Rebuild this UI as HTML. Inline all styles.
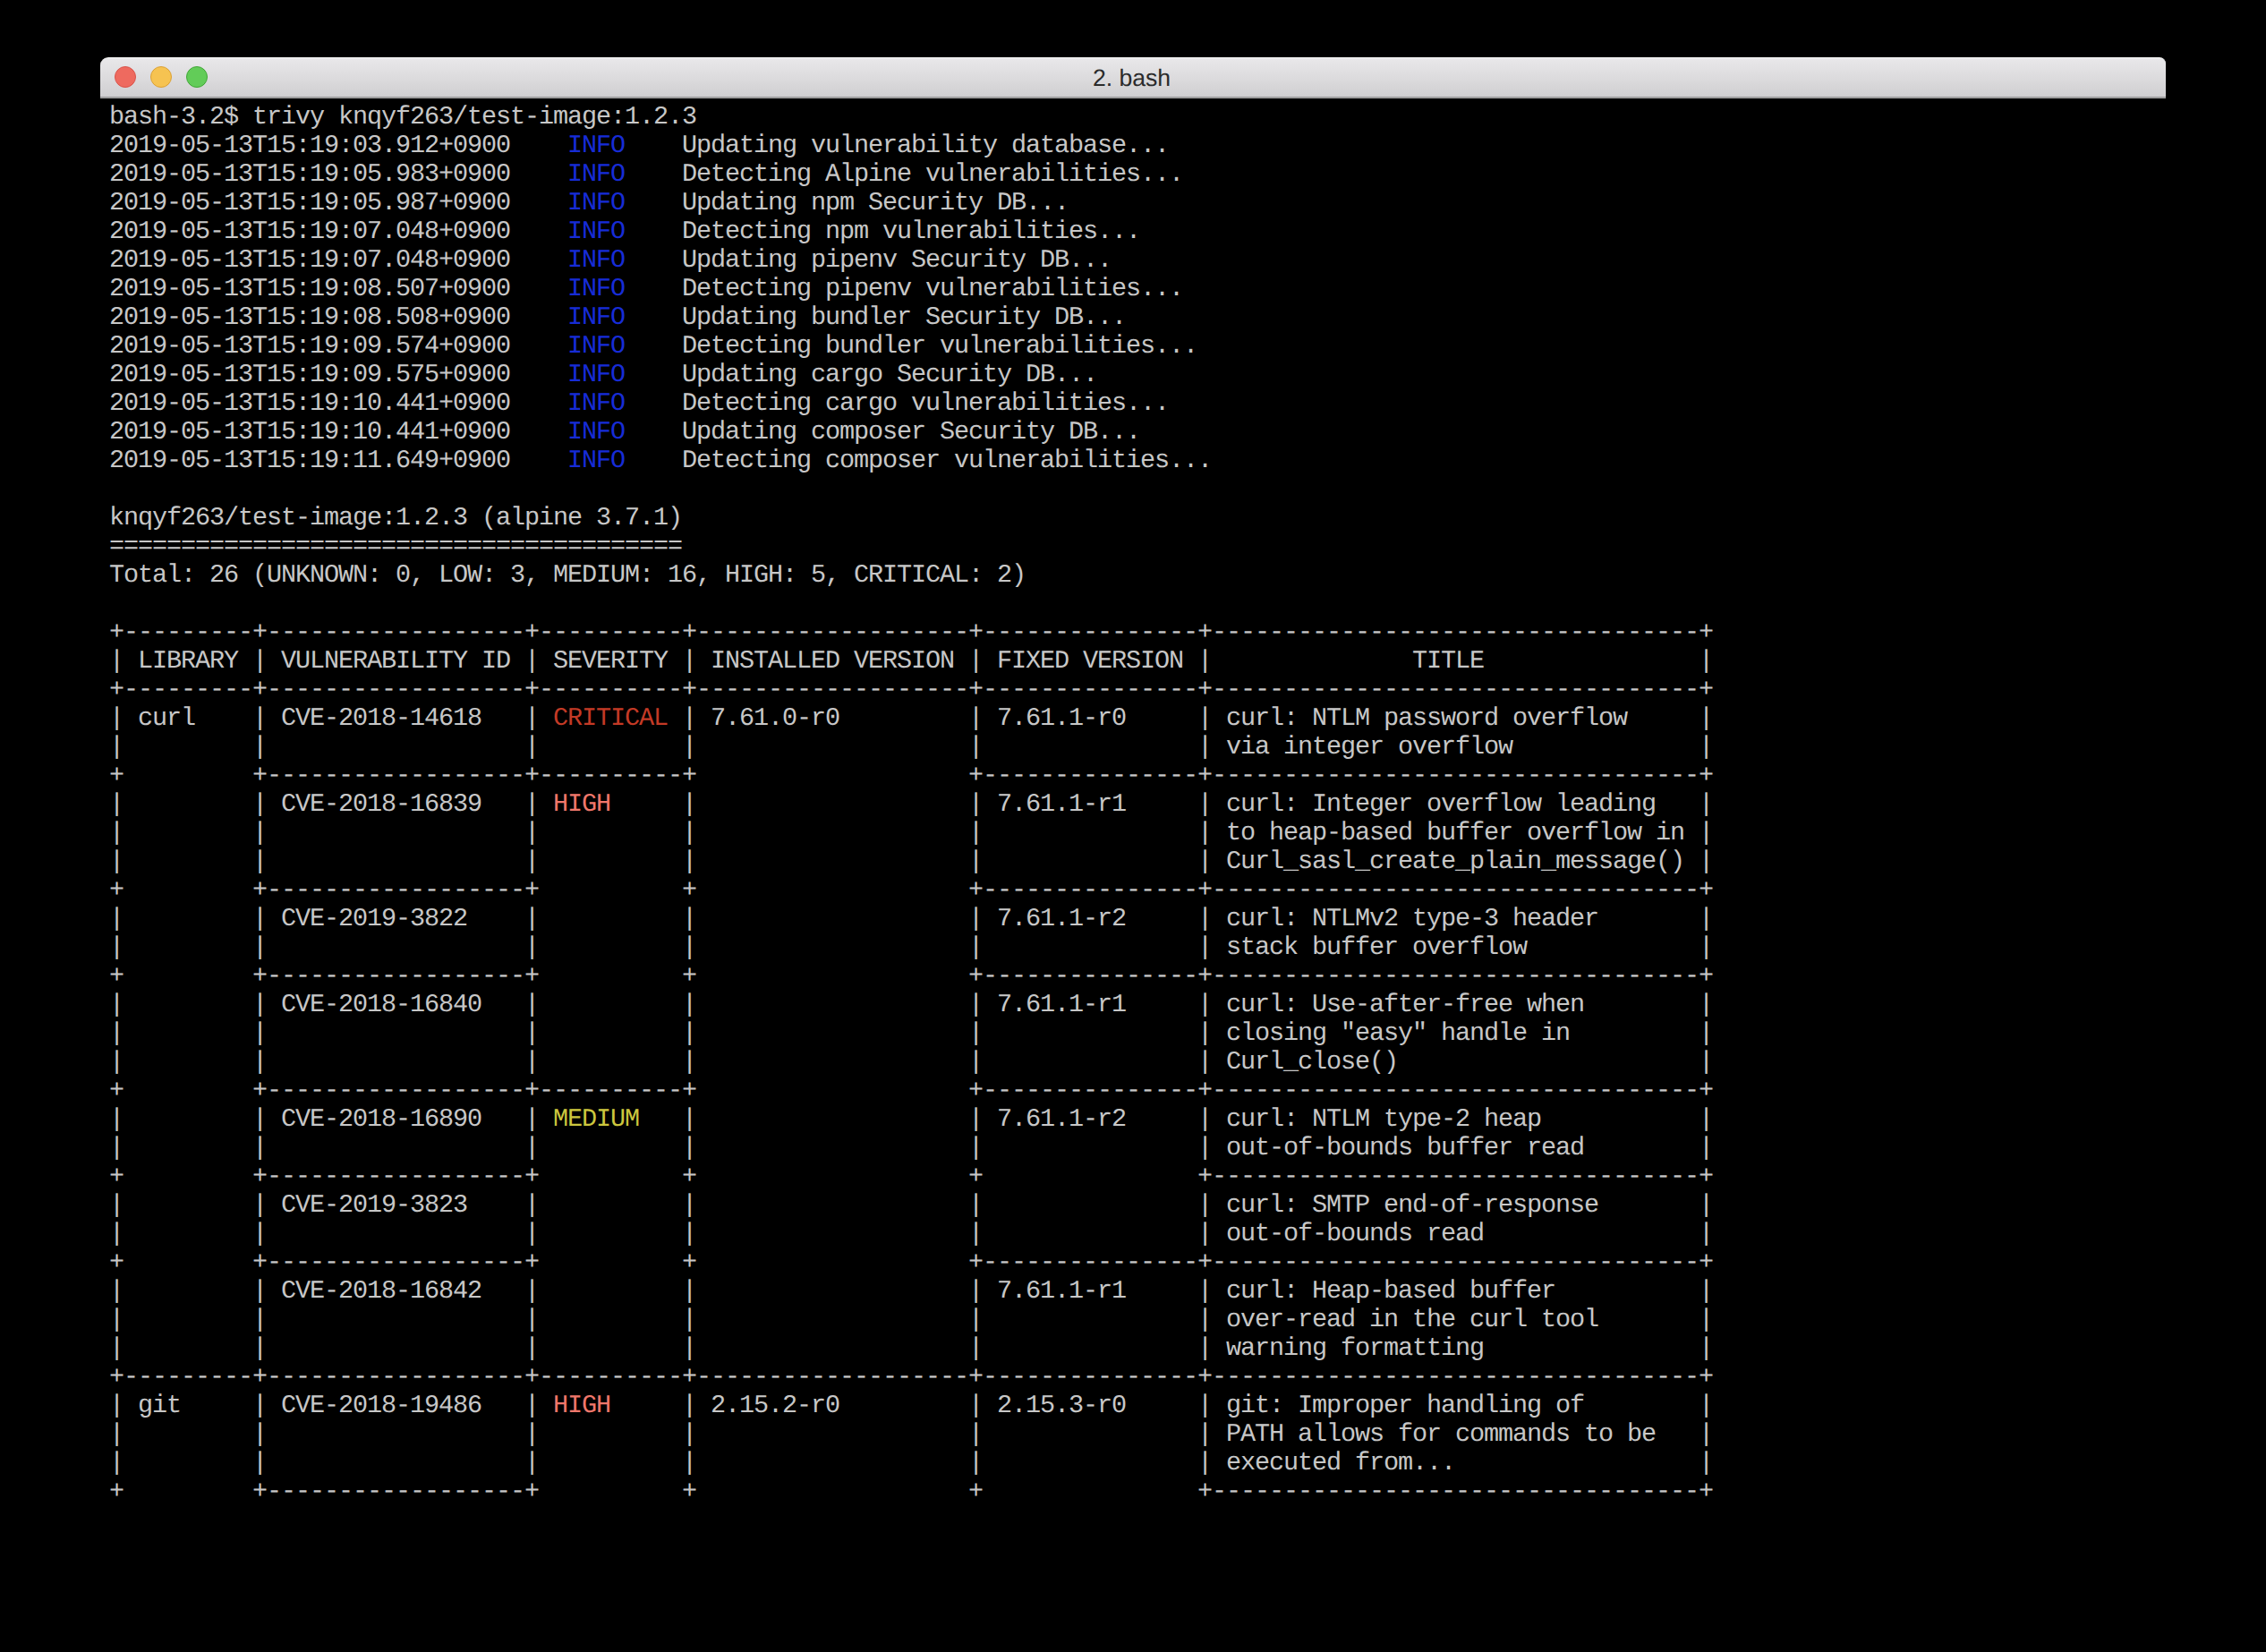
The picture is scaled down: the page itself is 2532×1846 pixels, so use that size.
<!DOCTYPE html>
<html><head><meta charset="utf-8">
<style>
html,body{margin:0;padding:0;background:#000;}
body{width:2532px;height:1846px;position:relative;overflow:hidden;}
#win{position:absolute;left:112px;top:64px;width:2308px;height:1782px;background:#000;}
#bar{position:absolute;left:112px;top:64px;width:2308px;height:44px;box-sizing:border-box;border-radius:9px 7px 0 0;
 background:linear-gradient(#e9e8ea,#d0cfd1);border-top:1px solid #f9f9f9;}
#l1{position:absolute;left:112px;top:108px;width:2308px;height:1px;background:#969696;}
#l2{position:absolute;left:112px;top:109px;width:2308px;height:1px;background:#a7a7a7;}
.dot{position:absolute;top:9px;width:24px;height:24px;border-radius:50%;box-sizing:border-box;}
#d1{left:16px;background:#ee6a5f;border:1px solid #d9534a;}
#d2{left:56px;background:#f6c351;border:1px solid #dba136;}
#d3{left:96px;background:#62cc58;border:1px solid #41a737;}
#title{position:absolute;left:-3px;right:0;top:0;height:44px;line-height:44px;text-align:center;font-family:"Liberation Sans",sans-serif;font-size:26.6px;color:#2b2b2b;text-rendering:geometricPrecision;}
#term{position:absolute;left:122px;top:115px;margin:0;font-family:"Liberation Mono",monospace;font-size:28.5px;letter-spacing:-1.1028px;line-height:32px;color:#c7c7c7;white-space:pre;text-rendering:geometricPrecision;}
.b{color:#172cd6;}
.r{color:#c43a26;}
.h{color:#f0776b;}
.y{color:#cdc63e;}
</style></head><body>
<div id="win"></div>
<div id="bar"><div class="dot" id="d1"></div><div class="dot" id="d2"></div><div class="dot" id="d3"></div><div id="title">2. bash</div></div>
<div id="l1"></div><div id="l2"></div>
<pre id="term">bash-3.2$ trivy knqyf263/test-image:1.2.3
2019-05-13T15:19:03.912+0900    <span class="b">INFO</span>    Updating vulnerability database...
2019-05-13T15:19:05.983+0900    <span class="b">INFO</span>    Detecting Alpine vulnerabilities...
2019-05-13T15:19:05.987+0900    <span class="b">INFO</span>    Updating npm Security DB...
2019-05-13T15:19:07.048+0900    <span class="b">INFO</span>    Detecting npm vulnerabilities...
2019-05-13T15:19:07.048+0900    <span class="b">INFO</span>    Updating pipenv Security DB...
2019-05-13T15:19:08.507+0900    <span class="b">INFO</span>    Detecting pipenv vulnerabilities...
2019-05-13T15:19:08.508+0900    <span class="b">INFO</span>    Updating bundler Security DB...
2019-05-13T15:19:09.574+0900    <span class="b">INFO</span>    Detecting bundler vulnerabilities...
2019-05-13T15:19:09.575+0900    <span class="b">INFO</span>    Updating cargo Security DB...
2019-05-13T15:19:10.441+0900    <span class="b">INFO</span>    Detecting cargo vulnerabilities...
2019-05-13T15:19:10.441+0900    <span class="b">INFO</span>    Updating composer Security DB...
2019-05-13T15:19:11.649+0900    <span class="b">INFO</span>    Detecting composer vulnerabilities...

knqyf263/test-image:1.2.3 (alpine 3.7.1)
========================================
Total: 26 (UNKNOWN: 0, LOW: 3, MEDIUM: 16, HIGH: 5, CRITICAL: 2)

+---------+------------------+----------+-------------------+---------------+----------------------------------+
| LIBRARY | VULNERABILITY ID | SEVERITY | INSTALLED VERSION | FIXED VERSION |              TITLE               |
+---------+------------------+----------+-------------------+---------------+----------------------------------+
| curl    | CVE-2018-14618   | <span class="r">CRITICAL</span> | 7.61.0-r0         | 7.61.1-r0     | curl: NTLM password overflow     |
|         |                  |          |                   |               | via integer overflow             |
+         +------------------+----------+                   +---------------+----------------------------------+
|         | CVE-2018-16839   | <span class="h">HIGH</span>     |                   | 7.61.1-r1     | curl: Integer overflow leading   |
|         |                  |          |                   |               | to heap-based buffer overflow in |
|         |                  |          |                   |               | Curl_sasl_create_plain_message() |
+         +------------------+          +                   +---------------+----------------------------------+
|         | CVE-2019-3822    |          |                   | 7.61.1-r2     | curl: NTLMv2 type-3 header       |
|         |                  |          |                   |               | stack buffer overflow            |
+         +------------------+          +                   +---------------+----------------------------------+
|         | CVE-2018-16840   |          |                   | 7.61.1-r1     | curl: Use-after-free when        |
|         |                  |          |                   |               | closing "easy" handle in         |
|         |                  |          |                   |               | Curl_close()                     |
+         +------------------+----------+                   +---------------+----------------------------------+
|         | CVE-2018-16890   | <span class="y">MEDIUM</span>   |                   | 7.61.1-r2     | curl: NTLM type-2 heap           |
|         |                  |          |                   |               | out-of-bounds buffer read        |
+         +------------------+          +                   +               +----------------------------------+
|         | CVE-2019-3823    |          |                   |               | curl: SMTP end-of-response       |
|         |                  |          |                   |               | out-of-bounds read               |
+         +------------------+          +                   +---------------+----------------------------------+
|         | CVE-2018-16842   |          |                   | 7.61.1-r1     | curl: Heap-based buffer          |
|         |                  |          |                   |               | over-read in the curl tool       |
|         |                  |          |                   |               | warning formatting               |
+---------+------------------+----------+-------------------+---------------+----------------------------------+
| git     | CVE-2018-19486   | <span class="h">HIGH</span>     | 2.15.2-r0         | 2.15.3-r0     | git: Improper handling of        |
|         |                  |          |                   |               | PATH allows for commands to be   |
|         |                  |          |                   |               | executed from...                 |
+         +------------------+          +                   +               +----------------------------------+</pre>
</body></html>
